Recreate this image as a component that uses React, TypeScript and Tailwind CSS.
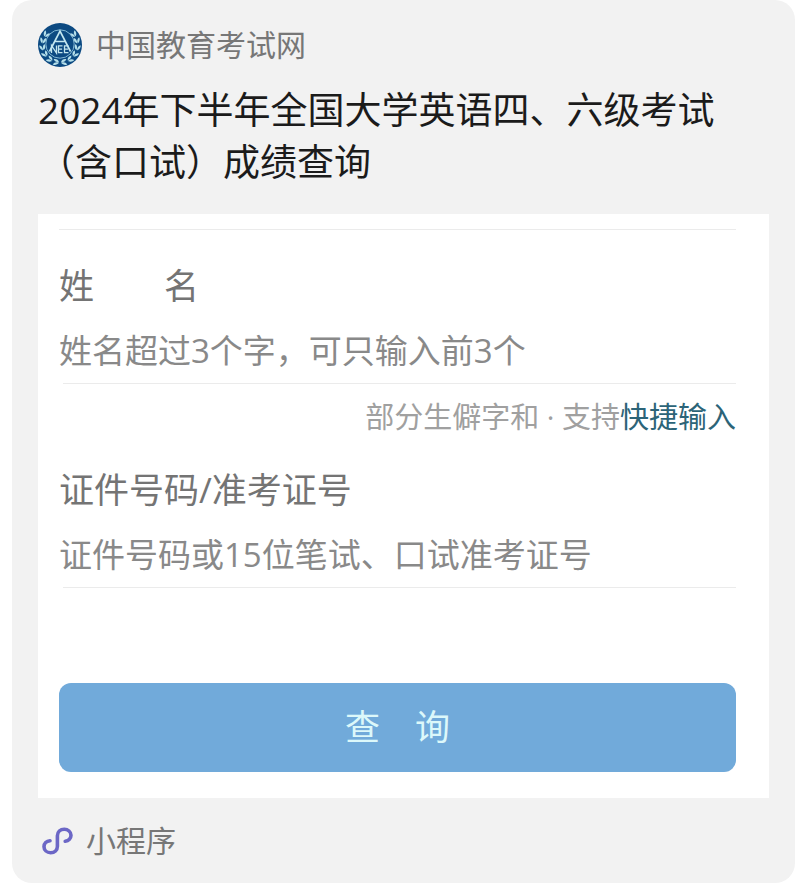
import React from "react";

const leaves = [0, 23, 46, 69, 92, 115];

function ExamLogo() {
  return (
    <svg viewBox="0 0 44 44" className="size-11 shrink-0" role="img" aria-label="NEEA">
      <circle cx="22" cy="22" r="22" fill="#0c4a82" />
      <circle cx="22" cy="21" r="14.2" fill="none" stroke="#8fc3dc" strokeWidth="0.9" />
      {[false, true].map((flip) => (
        <g key={String(flip)} transform={flip ? "translate(44 0) scale(-1 1)" : undefined}>
          {leaves.map((a) => (
            <g key={a} transform={`rotate(${a} 22 22)`}>
              <path d="M21 39.200c-2.600.2-4.400-.8-5.400-3 2.800-.6 4.600.6 5.400 3Z" fill="#b5dfea" />
              <path d="M21 39.800c-2 2.200-4.200 2.600-6.200 1.600 1.400-2 3.400-2.600 6.200-1.600Z" fill="#b5dfea" />
            </g>
          ))}
        </g>
      ))}
      <path d="M11.500 28.500 22 8 32.500 28.500M17.200 18.500h9.600" fill="none" stroke="#c3e6ef" strokeWidth="1.700" />
      <path
        d="M13.500 30v-7.500l5 7.500v-7.500M24.500 22.900h-4V29.600h4M20.500 26.200h3.600M30.500 22.900h-4V29.600h4M26.500 26.200h3.600"
        fill="none"
        stroke="#c3e6ef"
        strokeWidth="1.300"
      />
    </svg>
  );
}

function MiniProgramIcon() {
  return (
    <svg viewBox="0 0 32 28" className="h-7 w-8 shrink-0" fill="none" stroke="#6c67c6" strokeWidth="3.600" strokeLinecap="round" aria-hidden="true">
      <path d="M8 13.700C4.500 14 2 16.500 2 19.700c0 3.500 3 6 6.600 6 4 0 6.800-2.700 6.800-6.500V8.800c0-3.800 2.900-6.500 6.900-6.500 3.600 0 6.700 2.500 6.700 6 0 3-2.300 5.500-5.800 6" />
    </svg>
  );
}

type FieldProps = { id: string; label: string; placeholder: string };

function Field({ id, label, placeholder }: FieldProps) {
  return (
    <div>
      <label htmlFor={id} className="block text-[35px] leading-12 text-[#747474]">
        {label}
      </label>
      <input
        id={id}
        type="text"
        placeholder={placeholder}
        className="mt-2 block h-[65px] w-full bg-transparent text-[33px] text-[#777] outline-none placeholder:text-[#898989] placeholder:opacity-100"
      />
      <hr className="ml-1 border-t border-[#ebebeb]" />
    </div>
  );
}

export default function App() {
  return (
    <main className="bg-white pr-[5px] pb-3 pl-3 font-['Open_Sans','Noto_Sans_CJK_SC',sans-serif]">
      <article className="rounded-[20px] bg-[#f2f2f2] px-[26px] pt-[23px]">
        <header className="flex items-center gap-[14px]">
          <ExamLogo />
          <span className="text-[30px] leading-11 text-[#777]">中国教育考试网</span>
        </header>
        <h1 className="mt-[17px] text-[37px] leading-[52px] text-[#1b1b1b]">
          2024年下半年全国大学英语四、六级考试
          <br />
          （含口试）成绩查询
        </h1>

        <form
          onSubmit={(e) => e.preventDefault()}
          className="mt-[26px] bg-white pt-[15px] pr-[33px] pb-[26px] pl-[21px]"
        >
          <hr className="mb-8 border-t border-[#ebebeb]" />
          <Field id="name" label="姓　　名" placeholder="姓名超过3个字，可只输入前3个" />
          <p className="mb-4 text-right text-[29px] leading-[66px] whitespace-nowrap text-[#a0a0a0]">
            部分生僻字和 · 支持
            <a href="#quick-input" className="text-[#2c6478]">
              快捷输入
            </a>
          </p>
          <Field id="ticket" label="证件号码/准考证号" placeholder="证件号码或15位笔试、口试准考证号" />
          <button
            type="submit"
            className="mt-[95px] block h-[89px] w-full rounded-xl bg-[#71aada] text-[35px] text-[#dcf8fa]"
          >
            查　询
          </button>
        </form>

        <footer className="flex h-[85px] items-center gap-3 pl-1">
          <MiniProgramIcon />
          <span className="text-[30px] leading-11 text-[#777]">小程序</span>
        </footer>
      </article>
    </main>
  );
}
